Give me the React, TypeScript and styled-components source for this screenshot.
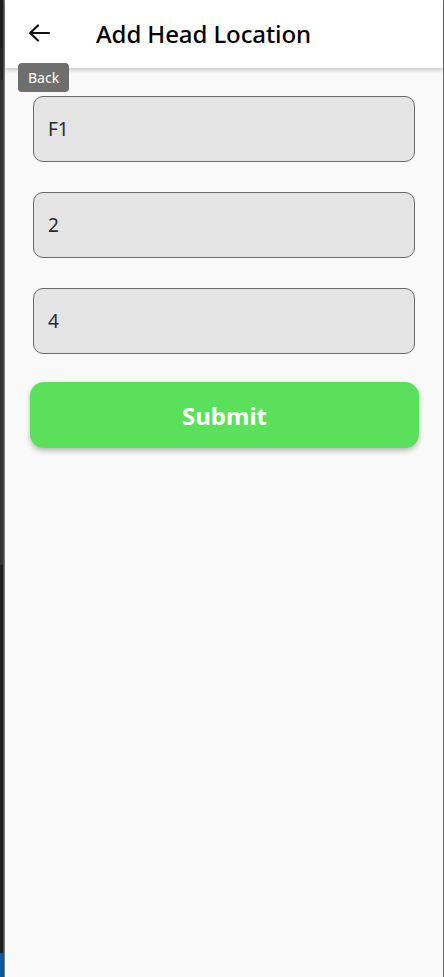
import React from 'react';
import styled, { createGlobalStyle } from 'styled-components';

const GlobalStyle = createGlobalStyle`
  html, body {
    margin: 0;
    padding: 0;
    height: 100%;
    overflow: hidden;
  }
  body {
    font-family: 'Noto Sans', 'Open Sans', sans-serif;
    background: #2b2b2b;
  }
  #root {
    height: 100%;
  }
`;

const fields = ['F1', '2', '4'];

function BackArrow() {
  return (
    <svg width="22" height="18" viewBox="0 0 22 18" fill="none">
      <path d="M21 9H2.5M10 1.5 2.2 9l7.8 7.5" stroke="#111" strokeWidth="2.2" strokeLinecap="round" strokeLinejoin="round" />
    </svg>
  );
}

export default function App() {
  return (
    <Screen>
      <GlobalStyle />
      <Desktop>
        <Strip $color="#1d1d1d" $height={48} />
        <Strip $color="#262626" $height={32} />
        <Strip $color="#343434" $height={485} />
        <Strip $color="#1e1e1e" $height={388} />
        <Strip $color="#0c5a98" $height={24} />
      </Desktop>
      <Window>
        <AppBar>
          <IconButton aria-label="Back">
            <BackArrow />
          </IconButton>
          <Title>Add Head Location</Title>
        </AppBar>
        <Tooltip>Back</Tooltip>
        <Form>
          {fields.map((value) => (
            <Field key={value}>{value}</Field>
          ))}
          <SubmitButton>Submit</SubmitButton>
        </Form>
      </Window>
    </Screen>
  );
}

const Screen = styled.div`
  display: flex;
  width: 444px;
  height: 977px;
`;

const Desktop = styled.div`
  width: 4px;
  display: flex;
  flex-direction: column;
  border-right: 1px solid #4a4a4a;
  box-sizing: border-box;
`;

const Strip = styled.div<{ $color: string; $height: number }>`
  background: ${(p) => p.$color};
  height: ${(p) => p.$height}px;
  flex-shrink: 0;
`;

const Window = styled.main`
  position: relative;
  flex: 1;
  background: #f9f9f9;
  border-left: 1px solid #7a7a7a;
  border-right: 1px solid #6e6e6e;
  display: flex;
  flex-direction: column;
`;

const AppBar = styled.header`
  height: 68px;
  background: #ffffff;
  display: flex;
  align-items: center;
  box-shadow: 0 2px 4px rgba(0, 0, 0, 0.22);
  position: relative;
  z-index: 1;
`;

const IconButton = styled.button`
  width: 28px;
  height: 28px;
  margin-left: 20px;
  padding: 0;
  border: none;
  background: none;
  display: flex;
  align-items: center;
  justify-content: center;
  margin-top: -3px;
`;

const Title = styled.h1`
  margin: -1px 0 0 43px;
  font-size: 24px;
  font-weight: 500;
  color: #000;
  letter-spacing: -0.1px;
`;

const Tooltip = styled.div`
  position: absolute;
  left: 13px;
  top: 63px;
  z-index: 2;
  height: 29px;
  padding: 0 10px;
  display: flex;
  align-items: center;
  background: #6e6e6e;
  color: #fff;
  font-size: 14px;
  border-radius: 4px;
`;

const Form = styled.section`
  display: flex;
  flex-direction: column;
  gap: 30px;
  padding: 28px 0 0;
`;

const Field = styled.div`
  margin: 0 28px;
  height: 66px;
  box-sizing: border-box;
  border: 1px solid #6a6a6a;
  border-radius: 10px;
  background: #e4e4e4;
  display: flex;
  align-items: center;
  padding-left: 14px;
  font-size: 19px;
  color: #2a2a2a;
`;

const SubmitButton = styled.button`
  margin: -2px 24px 0 25px;
  height: 66px;
  border: none;
  border-radius: 14px;
  background: #5ae05a;
  color: #fff;
  font-family: 'Noto Sans', 'Open Sans', sans-serif;
  font-size: 24px;
  font-weight: 700;
  box-shadow: 0 3px 5px rgba(0, 0, 0, 0.25);
`;
